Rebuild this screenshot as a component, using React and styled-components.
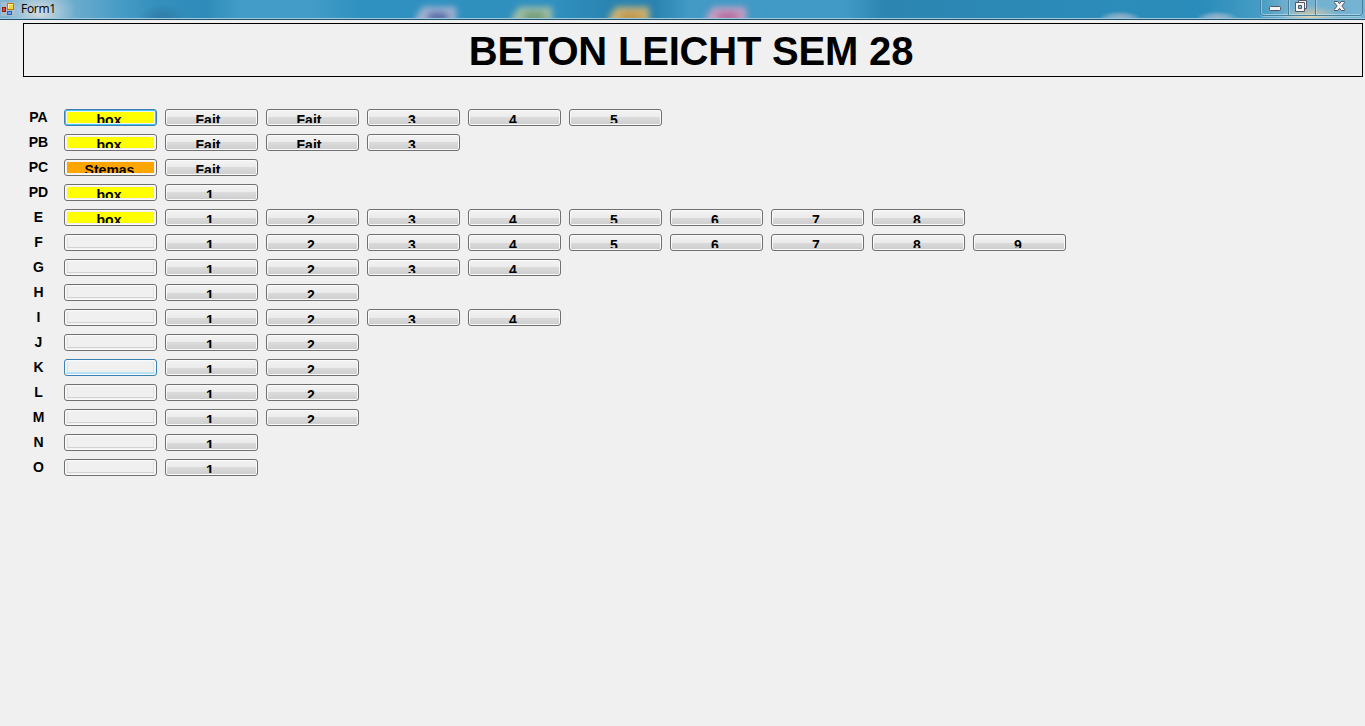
import React from 'react';
import styled, { createGlobalStyle, css } from 'styled-components';

const Global = createGlobalStyle`
  html, body { margin: 0; padding: 0; background: #f0f0f0; overflow: hidden; }
  *, *::before, *::after { box-sizing: border-box; }
`;

const Window = styled.div`
  width: 1365px;
  height: 726px;
  background: #f0f0f0;
  overflow: hidden;
  color: #000;
  font-family: 'Liberation Sans', Arial, sans-serif;
`;

const TitleBar = styled.header`
  height: 20px;
  display: flex;
  justify-content: space-between;
  border-bottom: 1px solid #235068;
  box-shadow: inset 0 -1px 0 #9fcbe0;
  background:
    radial-gradient(ellipse 36px 24px at 40px 12px, rgba(235, 228, 224, 0.85), rgba(200, 215, 225, 0.55) 50%, transparent),
    radial-gradient(ellipse 24px 14px at 162px 18px, rgba(40, 105, 145, 0.5), transparent),
    radial-gradient(ellipse 22px 8px at 1120px 19px, rgba(190, 195, 208, 0.8), rgba(190, 195, 208, 0.5) 55%, transparent),
    radial-gradient(ellipse 22px 8px at 1217px 19px, rgba(190, 195, 208, 0.8), rgba(190, 195, 208, 0.5) 55%, transparent),
    radial-gradient(ellipse 30px 13px at 1310px 18px, rgba(240, 205, 150, 0.9), transparent),
    linear-gradient(90deg, #7fb5d2 0, #6fadcd 70px, #469cc6 120px, #3590bd 155px, #2e8bb9 205px, #439cc7 240px, #439cc7 310px, #2f91c0 360px, #2f90be 480px, #3090bf 555px, #2a84b1 610px, #2a82af 655px, #429ac5 690px, #419ac6 845px, #2c85b1 885px, #2c8bb9 1090px, #2a8cba 1200px, #459cc4 1260px, #74b1d0 1290px, #74b3d2 1365px);
`;

const Caption = styled.div`
  display: flex;
  align-items: flex-start;
  padding: 2px 0 0 1px;
  gap: 5px;
  font: 12px/14px 'Open Sans', 'Noto Sans', sans-serif;
  letter-spacing: -0.3px;
`;

const CaptionButtons = styled.div`
  display: flex;
  width: 103px;
  height: 16px;
  margin-right: 2px;
  border: 1px solid #477f9d;
  border-top: 0;
  border-radius: 0 0 4px 4px;
  box-shadow: inset 0 -1px 0 rgba(200, 230, 242, 0.6), inset 1px 0 0 rgba(200, 230, 242, 0.5), 0 1px 0 rgba(200, 230, 242, 0.5);
`;

const CaptionButton = styled.div`
  width: ${({ $width }) => $width}px;
  height: 15px;
  border-right: ${({ $last }) => ($last ? '0' : '1px solid #477f9d')};
  box-shadow: ${({ $last }) => ($last ? 'none' : '1px 0 0 rgba(200, 230, 242, 0.5)')};
  display: flex;
  justify-content: center;

  svg { display: block; }
`;

const Heading = styled.h1`
  margin: 3px 2px 0 23px;
  height: 54px;
  border: 1px solid #000;
  padding: 2px 4px 0 0;
  display: flex;
  align-items: center;
  justify-content: center;
  font-size: 40px;
  line-height: 46px;
  letter-spacing: -0.2px;
  font-weight: 700;
  white-space: nowrap;
`;

const Grid = styled.main`
  margin: 32px 0 0 14px;
  display: flex;
  flex-direction: column;
  gap: 8px;
`;

const Row = styled.div`
  display: flex;
  gap: 8px;
  height: 17px;
`;

const RowLabel = styled.span`
  width: 49px;
  margin-right: -7px;
  text-align: center;
  font-size: 14px;
  line-height: 17px;
  font-weight: 700;
`;

const frames = {
  normal: css`border-color: #707070; box-shadow: inset 0 0 0 1px #fafafa;`,
  focused: css`border-color: #3c7fb1; box-shadow: inset 0 0 0 1px #43c5f1;`,
  hot: css`border-color: #3c7fb1; box-shadow: inset 0 0 0 1px #f5fbfe, inset 0 -2px 0 #b3dff5;`,
};

const Button = styled.button`
  appearance: none;
  width: 93px;
  height: 17px;
  padding: 2px;
  border: 1px solid;
  border-radius: 3px;
  background: ${({ $flat }) =>
    $flat ? '#f2f2f2' : 'linear-gradient(#f3f3f3 0, #ebebeb 50%, #dbdbdb 50%, #cdcdcd 100%)'};
  ${({ $frame }) => frames[$frame]}
`;

const Face = styled.span`
  display: block;
  height: 11px;
  overflow: hidden;
  text-align: center;
  padding: 1px ${({ $inset = 3 }) => $inset}px 0 0;
  font: 700 14px/14px 'Liberation Sans', Arial, sans-serif;
  color: #000;
  background: ${({ $fill }) => $fill};
  box-shadow: ${({ $hollow, $hot }) =>
    $hollow ? `inset 0 -1px 0 ${$hot ? '#b9e3f7' : '#d2d2d2'}, inset 1px 0 0 #e2e2e2, inset -1px 0 0 #e2e2e2` : 'none'};
`;

const FILLS = { box: '#ffff00', Stemas: '#ffa500', '': '#f0f0f0' };
const INSETS = { Fait: 7, Stemas: 2 };

const numbers = (from, to) =>
  Array.from({ length: to - from + 1 }, (_, i) => String(from + i));

const ROWS = [
  { label: 'PA', status: 'box', frame: 'focused', steps: ['Fait', 'Fait', ...numbers(3, 5)] },
  { label: 'PB', status: 'box', steps: ['Fait', 'Fait', '3'] },
  { label: 'PC', status: 'Stemas', steps: ['Fait'] },
  { label: 'PD', status: 'box', steps: numbers(1, 1) },
  { label: 'E', status: 'box', steps: numbers(1, 8) },
  { label: 'F', status: '', steps: numbers(1, 9) },
  { label: 'G', status: '', steps: numbers(1, 4) },
  { label: 'H', status: '', steps: numbers(1, 2) },
  { label: 'I', status: '', steps: numbers(1, 4) },
  { label: 'J', status: '', steps: numbers(1, 2) },
  { label: 'K', status: '', frame: 'hot', steps: numbers(1, 2) },
  { label: 'L', status: '', steps: numbers(1, 2) },
  { label: 'M', status: '', steps: numbers(1, 2) },
  { label: 'N', status: '', steps: numbers(1, 1) },
  { label: 'O', status: '', steps: numbers(1, 1) },
];

const Wallpaper = styled.svg`
  position: absolute;
  left: 400px;
  top: 0;
`;

const FormIcon = () => (
  <svg width="15" height="14" viewBox="0 0 15 14">
    <rect width="14" height="14" fill="#b4bfc9" opacity=".75" />
    <rect x="6.5" y="1.5" width="6" height="6" fill="#fbd03d" stroke="#b67b0c" />
    <path d="M7 2h5v1H8v3H7z" fill="#fff0a0" />
    <rect x="1.5" y="5.5" width="3" height="4" fill="#dc4632" stroke="#9c1b14" />
    <rect x="6.5" y="9.5" width="4" height="3" fill="#6da2f2" stroke="#2f5fc2" />
  </svg>
);

const MinimizeIcon = () => (
  <svg width="12" height="15" viewBox="0 0 12 15">
    <rect x=".5" y="6.5" width="11" height="4" rx="1" fill="#f4f4f4" stroke="#535666" />
  </svg>
);

const RestoreIcon = () => (
  <svg width="14" height="15" viewBox="0 0 14 15" fill="#f4f4f4" stroke="#535666">
    <path d="M3.5 .5h8v8h-8z" />
    <path d="M.5 2.5h9v9h-9z" />
    <path d="M3.5 5.5h3v3h-3z" fill="#8abbd4" />
  </svg>
);

const CloseIcon = () => (
  <svg width="11" height="15" viewBox="0.5 0 11 15">
    <path d="M.8 1.5h3.4L6 3.7l1.8-2.2h3.4v1L8.4 6l2.8 3.5v1H7.8L6 8.3l-1.8 2.2H.8v-1L3.6 6 .8 2.5z" fill="#f6f6f6" stroke="#535666" />
  </svg>
);

const blobs = [
  [16, '#a5b4d2', '#5068a8'],
  [112, '#a0bda4', '#719c76'],
  [209, '#c9b374', '#c2954a'],
  [306, '#c49fc3', '#b66c9f'],
];

export default function App() {
  return (
    <>
      <Global />
      <Window>
        <TitleBar>
          <Wallpaper width="400" height="18">
            <defs>
              <filter id="soft" x="-30%" y="-60%" width="160%" height="220%">
                <feGaussianBlur stdDeviation="3" />
              </filter>
            </defs>
            <g filter="url(#soft)">
              {blobs.map(([x, outer, inner]) => (
                <g key={x}>
                  <path d={`M${x} 26V17l7-10h33v19z`} fill={outer} />
                  <ellipse cx={x + 22} cy="17" rx="12" ry="5" fill={inner} />
                </g>
              ))}
            </g>
          </Wallpaper>
          <Caption>
            <FormIcon />
            <span>Form1</span>
          </Caption>
          <CaptionButtons>
            <CaptionButton $width={28}><MinimizeIcon /></CaptionButton>
            <CaptionButton $width={27}><RestoreIcon /></CaptionButton>
            <CaptionButton $width={46} $last><CloseIcon /></CaptionButton>
          </CaptionButtons>
        </TitleBar>
        <Heading>BETON LEICHT SEM 28</Heading>
        <Grid>
          {ROWS.map(({ label, status, frame = 'normal', steps }) => (
            <Row key={label}>
              <RowLabel>{label}</RowLabel>
              <Button $flat $frame={frame}>
                <Face $fill={FILLS[status]} $inset={INSETS[status]} $hollow={!status} $hot={frame === 'hot'}>{status}</Face>
              </Button>
              {steps.map((step, i) => (
                <Button key={i} $frame="normal">
                  <Face $fill="transparent" $inset={INSETS[step]}>{step}</Face>
                </Button>
              ))}
            </Row>
          ))}
        </Grid>
      </Window>
    </>
  );
}
